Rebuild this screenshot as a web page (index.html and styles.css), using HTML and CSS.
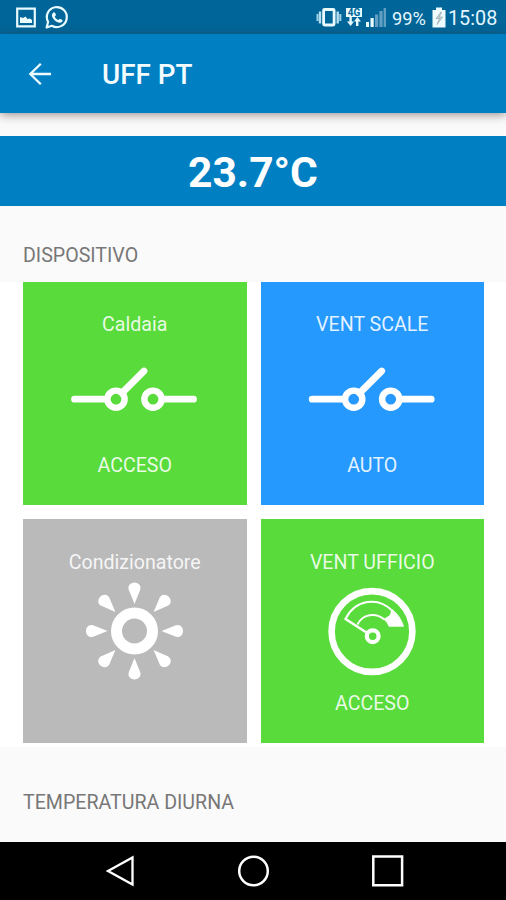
FILE: index.html
```html
<!DOCTYPE html>
<html lang="it">
<head>
<meta charset="utf-8">
<title>UFF PT</title>
<link rel="stylesheet" href="styles.css">
</head>
<body>
<div class="screen">
  <div class="status">
    <svg class="status-left" width="54" height="34" viewBox="0 0 54 34" fill="none">
      <path d="M1.200 8.700h17.600v17.600H1.200z" stroke="#e9fbff" stroke-width="2.200"/>
      <path d="M4 23V17l3 1 2.500-1.500 2 2.500 2.500-.5 2 1.500v3z" fill="#e9fbff"/>
      <path d="M30.600 27.500l1.500-5.500a10 10 0 1 1 3.800 3.800z" stroke="#e9fbff" stroke-width="2.200" stroke-linejoin="round"/>
      <path d="M36.800 12.900c.8-1.200 2-.8 2.400.2l.8 2-1.200 1.600c.8 1.700 2 2.700 3.500 3.400l1.500-1.400 2.600 1.300c.8.600-.3 2.500-2 2.800-3.800.4-8.800-4.600-8.500-7.800.1-.8.4-1.500.9-2.100z" fill="#e9fbff"/>
    </svg>
    <div class="status-right">
      <svg width="27" height="34" viewBox="0 0 27 34" fill="none">
        <rect x="8.600" y="9.500" width="10.500" height="15.500" rx="1" stroke="#e9fbff" stroke-width="2.800"/>
        <path d="M5 11.500v12M22.700 11.500v12" stroke="#b4dff0" stroke-width="2.400"/>
        <path d="M2.500 14v7M25.300 14v7" stroke="#a2d0e5" stroke-width="2"/>
      </svg>
      <div class="network">
        <span class="network-label">4G</span>
        <svg width="16" height="9" viewBox="0 0 16 9" fill="#e9fbff"><path d="M3.400 0h2.400v4.500H8L4.600 9 1 4.500h2.400zM10 9h2.400V4.500H15L11.300 0 8 4.500h2z"/></svg>
      </div>
      <svg class="signal" width="22" height="34" viewBox="0 0 22 34">
        <path d="M1 22h3v5H1zM5.500 18h3.200v9H5.500z" fill="#e9fbff"/>
        <path d="M10 14.500h3.200V27H10zM14.400 11h3.200v16h-3.200zM18.600 8H21v19h-2.400z" fill="#619fc3"/>
      </svg>
      <span class="percent">99%</span>
      <svg class="battery" width="14" height="34" viewBox="0 0 14 34"><path d="M4 7.500h6V10h3.500v17.500H.5V10H4z" fill="#effcff"/><path d="M9 12L4 18.500h3.500L5 24.500l5.500-7.500H7.200L9.500 12z" fill="#c9d5d5" stroke="#8fa4a8" stroke-width=".7"/></svg>
      <span class="clock">15:08</span>
    </div>
  </div>
  <header class="appbar">
    <svg class="back" width="24" height="24" viewBox="0 0 24 24" fill="none" stroke="#eefaff" stroke-width="2.300"><path d="M24 12H3.300M13.800 1.700L3.300 12l10.500 10.300"/></svg>
    <h1 class="title">UFF PT</h1>
  </header>
  <main>
    <div class="temperature">23.7°C</div>
    <h2 class="section">DISPOSITIVO</h2>
    <div class="tiles">
      <div class="tile on">
        <span class="label">Caldaia</span>
        <svg class="icon" viewBox="0 0.500 224 115" fill="none" stroke="#fff" stroke-width="6.800" stroke-linecap="round">
          <path d="M51.500 61.700H81M142 61.700h28.500M99 55.500l22-22"/>
          <circle cx="93" cy="61.700" r="8.600" stroke-width="6.400"/><circle cx="130" cy="61.700" r="8.600" stroke-width="6.400"/>
        </svg>
        <span class="label">ACCESO</span>
      </div>
      <div class="tile auto">
        <span class="label">VENT SCALE</span>
        <svg class="icon" viewBox="-0.700 0.500 224 115" fill="none" stroke="#fff" stroke-width="6.800" stroke-linecap="round">
          <path d="M51.500 61.700H81M142 61.700h28.500M99 55.500l22-22"/>
          <circle cx="93" cy="61.700" r="8.600" stroke-width="6.400"/><circle cx="130" cy="61.700" r="8.600" stroke-width="6.400"/>
        </svg>
        <span class="label">AUTO</span>
      </div>
      <div class="tile off">
        <span class="label">Condizionatore</span>
        <svg class="icon" viewBox="0 0 224 115" fill="#fff">
          <defs><path id="ray" d="M0-27L-5-39.500C-8-45-4-48.500 0-48.500S8-45 5-39.500z"/></defs>
          <circle cx="111.500" cy="55" r="18" fill="none" stroke="#fff" stroke-width="11"/>
          <g transform="translate(111.500 55)">
            <use href="#ray"/><use href="#ray" transform="rotate(45)"/><use href="#ray" transform="rotate(90)"/><use href="#ray" transform="rotate(135)"/>
            <use href="#ray" transform="rotate(180)"/><use href="#ray" transform="rotate(225)"/><use href="#ray" transform="rotate(270)"/><use href="#ray" transform="rotate(315)"/>
          </g>
        </svg>
      </div>
      <div class="tile on">
        <span class="label">VENT UFFICIO</span>
        <svg class="icon" viewBox="-0.500 0 224 115" fill="none" stroke="#fff">
          <circle cx="111.500" cy="55.500" r="40.400" stroke-width="6.600"/>
          <path d="M85 43C95 23 118 20.500 132 35M97 48.500C102 38 115 36 124 43.500" stroke-width="1.900"/>
          <path d="M85 43L106 56.500" stroke-width="2.600" stroke-linecap="round"/>
          <circle cx="112.200" cy="60.200" r="5.900" stroke-width="4.200"/>
          <path d="M131.500 33.500Q140 40 143 50.300h-14.500q-1.500-4-5-7l6-3.800z" fill="#fff" stroke-width=".8"/>
        </svg>
        <span class="label">ACCESO</span>
      </div>
    </div>
    <h2 class="section">TEMPERATURA DIURNA</h2>
  </main>
  <nav class="navbar">
    <svg width="30" height="32" viewBox="0 0 30 32" fill="none" stroke="#fff" stroke-width="2.300"><path d="M3 16L27.500 2.500v27z"/></svg>
    <svg width="32" height="32" viewBox="0 0 32 32" fill="none" stroke="#fff" stroke-width="2.500"><circle cx="15.500" cy="16" r="14.300"/></svg>
    <svg width="32" height="32" viewBox="0 0 32 32" fill="none" stroke="#fff" stroke-width="2.500"><path d="M1.300 1.500h28.800v28.800H1.300z"/></svg>
  </nav>
</div>
</body>
</html>
```
FILE: styles.css
```css
* { box-sizing: border-box; }
body { margin: 0; font-family: Roboto, sans-serif; background: #fafafa; }
.screen { width: 506px; height: 900px; display: flex; flex-direction: column; overflow: hidden; }
svg { display: block; flex: none; }
.status { height: 34px; flex: none; display: flex; justify-content: space-between; padding: 0 9px 0 16px; background: #006598; color: #e4f7ff; }
.status-right { display: flex; align-items: center; }
.network { width: 16px; margin-left: 4px; }
.network-label { display: block; height: 9px; background: #e9fbff; color: #006598; font-size: 10px; line-height: 10px; font-weight: 700; text-align: center; }
.signal { margin-left: 3px; }
.percent { width: 34px; margin-left: 5px; font-size: 18.300px; line-height: 34px; padding-top: 3px; }
.battery { margin-left: 6px; }
.clock { width: 49px; margin-left: 2px; font-size: 19.800px; line-height: 34px; padding-top: 3px; }
.appbar { position: relative; height: 78.500px; flex: none; display: flex; align-items: center; padding: 2px 27px 0; background: #0080c3; box-shadow: 0 2px 9px rgba(70, 45, 45, .5); }
.title { margin: 2px 0 0 51px; color: #f4fcff; font-size: 27.800px; line-height: 36px; font-weight: 500; }
main { flex: 1; padding-top: 23.500px; }
.temperature { height: 70px; padding-top: 2px; background: #0080c3; color: #fff; font-size: 42.500px; line-height: 70px; font-weight: 700; text-align: center; }
.section { margin: 0; height: 75.500px; padding: 36px 23px 0; color: #777; font-size: 19.600px; line-height: 28px; font-weight: 400; }
.tiles { display: grid; grid-template-columns: 223.500px 223.500px; grid-auto-rows: 223.500px; gap: 14px; padding: 0 23px 4px; background: #fff; }
.tile { display: flex; flex-direction: column; align-items: center; padding-top: 30.500px; color: rgba(255, 255, 255, .88); font-size: 19.600px; line-height: 26px; }
.on { background: #58db3b; }
.auto { background: #2699ff; }
.off { background: #bababa; }
.icon { width: 224px; height: 115px; }
.label { white-space: nowrap; }
.section:last-child { height: 95px; padding-top: 42px; }
.navbar { height: 58px; flex: none; display: flex; justify-content: space-between; align-items: center; padding: 0 102px 0 105px; background: #000; }
```
